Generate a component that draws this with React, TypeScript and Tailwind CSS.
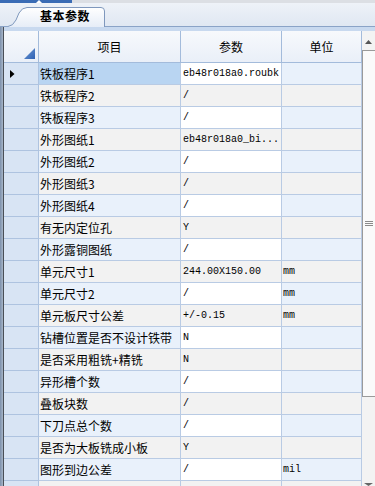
import React from "react";

type Row = { item: string; param: string; unit: string };

const rows: Row[] = [
  { item: "铁板程序1", param: "eb48r018a0.roubk", unit: "" },
  { item: "铁板程序2", param: "/", unit: "" },
  { item: "铁板程序3", param: "/", unit: "" },
  { item: "外形图纸1", param: "eb48r018a0_bi...", unit: "" },
  { item: "外形图纸2", param: "/", unit: "" },
  { item: "外形图纸3", param: "/", unit: "" },
  { item: "外形图纸4", param: "/", unit: "" },
  { item: "有无内定位孔", param: "Y", unit: "" },
  { item: "外形露铜图纸", param: "/", unit: "" },
  { item: "单元尺寸1", param: "244.00X150.00", unit: "mm" },
  { item: "单元尺寸2", param: "/", unit: "mm" },
  { item: "单元板尺寸公差", param: "+/-0.15", unit: "mm" },
  { item: "钻槽位置是否不设计铁带", param: "N", unit: "" },
  { item: "是否采用粗铣+精铣", param: "N", unit: "" },
  { item: "异形槽个数", param: "/", unit: "" },
  { item: "叠板块数", param: "/", unit: "" },
  { item: "下刀点总个数", param: "/", unit: "" },
  { item: "是否为大板铣成小板", param: "Y", unit: "" },
  { item: "图形到边公差", param: "/", unit: "mil" },
  { item: "", param: "", unit: "" },
];

function GridRow({ row, index }: { row: Row; index: number }) {
  const alt = index % 2 === 1;
  const selected = index === 0;
  const itemBg = selected ? "bg-[#b9d5f2]" : alt ? "bg-[#f2f2f2]" : "bg-[#e9f1fb]";
  const paramBg = alt ? "bg-[#f2f2f2]" : "bg-white";
  const unitBg = alt ? "bg-[#f2f2f2]" : "bg-[#e9f1fb]";
  return (
    <div className="flex h-[22px] shrink-0">
      <div className="w-[35px] shrink-0 bg-[#d8e4f4] border-r border-b border-[#aec3e0] flex items-center pl-[6px]">
        {selected && (
          <svg width="5" height="8" viewBox="0 0 5 8">
            <path d="M0 0 L4.5 4 L0 8 Z" fill="#000" />
          </svg>
        )}
      </div>
      <div className={`w-[142px] shrink-0 ${itemBg} border-r border-b border-[#b9cbe4] flex items-center pl-[1px] text-[12px] text-black whitespace-nowrap overflow-hidden`}>
        {row.item}
      </div>
      <div className={`w-[101px] shrink-0 ${paramBg} border-r border-b border-[#b9cbe4] flex items-center pl-[2px] text-[10px] text-black whitespace-nowrap overflow-hidden font-['Liberation_Mono',monospace]`}>
        {row.param}
      </div>
      <div className={`w-[80px] shrink-0 ${unitBg} border-r border-b border-[#b9cbe4] flex items-center pl-[1px] text-[10px] text-black whitespace-nowrap overflow-hidden font-['Liberation_Mono',monospace]`}>
        {row.unit}
      </div>
    </div>
  );
}

export default function App() {
  return (
    <div className="w-[375px] h-[486px] overflow-hidden flex flex-col bg-[#eef2f7] font-['Noto_Sans_CJK_SC','Noto_Sans',sans-serif]">
      {/* top band */}
      <div className="h-[3px] flex shrink-0">
        <div className="w-[35px] bg-[#3a6cb5]" />
        <div className="w-[8px] bg-[#3a6cb5] flex justify-center">
          <svg width="8" height="3" viewBox="0 0 8 3">
            <path d="M1 3 L4 0 L7 3 Z" fill="#ffffff" />
          </svg>
        </div>
        <div className="w-[29px] bg-[#3a6cb5]" />
        <div className="flex-1 bg-[#dcdfe4]" />
      </div>

      {/* tab strip */}
      <div className="h-[24px] shrink-0 flex bg-gradient-to-b from-[#eef2f8] to-[#dfe7f2]">
        <div className="w-[8px] shrink-0 border-b border-[#8aa3c7]" />
        <div className="w-[97px] shrink-0 flex flex-col justify-end">
          <div className="relative h-[20px] flex items-center pl-[32px] pb-[2px]">
            <svg className="absolute inset-0" width="97" height="20" viewBox="0 0 97 20">
              <defs>
                <linearGradient id="tabg" x1="0" y1="0" x2="0" y2="1">
                  <stop offset="0" stopColor="#ffffff" />
                  <stop offset="1" stopColor="#e6edf7" />
                </linearGradient>
              </defs>
              <path
                d="M0 20 L0 19.5 Q5 19 8 13 L11 6 Q14 0.5 19 0.5 L93 0.5 Q96.5 0.5 96.5 4 L96.5 20 Z"
                fill="url(#tabg)"
              />
              <path
                d="M0 19.5 Q5 19 8 13 L11 6 Q14 0.5 19 0.5 L93 0.5 Q96.5 0.5 96.5 4 L96.5 20"
                fill="none"
                stroke="#7f98bd"
                strokeWidth="1"
              />
            </svg>
            <span className="relative text-[12px] font-bold text-black leading-none tracking-[0.5px]">基本参数</span>
          </div>
        </div>
        <div className="flex-1 border-b border-[#8aa3c7]" />
      </div>

      {/* body */}
      <div className="flex-1 flex min-h-0">
        <div className="w-[3px] shrink-0 bg-gradient-to-r from-[#7d90ab] to-[#a7b6c9]" />
        <div className="w-[1px] shrink-0 bg-[#4a4f57]" />
        <div className="flex-1 flex flex-col min-h-0 bg-[#c8d9ef]">
          <div className="h-[4px] shrink-0" />
          <div className="flex flex-1 min-h-0">
            {/* grid */}
            <div className="w-[358px] shrink-0 flex flex-col overflow-hidden bg-[#f2f2f2]">
              {/* header */}
              <div className="flex h-[32px] shrink-0 bg-gradient-to-b from-[#f7f9fc] to-[#e9eff8]">
                <div className="w-[35px] shrink-0 border-r border-b border-[#a3bbdb] flex items-end justify-end pr-[3px] pb-[3px]">
                  <svg width="11" height="11" viewBox="0 0 11 11">
                    <defs>
                      <linearGradient id="cg" x1="0" y1="0" x2="1" y2="1">
                        <stop offset="0" stopColor="#6f9ad6" />
                        <stop offset="1" stopColor="#2f62b3" />
                      </linearGradient>
                    </defs>
                    <path d="M11 0 L11 11 L0 11 Z" fill="url(#cg)" />
                  </svg>
                </div>
                <div className="w-[142px] shrink-0 border-r border-b border-[#a3bbdb] flex items-center justify-center text-[12px] text-black">
                  项目
                </div>
                <div className="w-[101px] shrink-0 border-r border-b border-[#a3bbdb] flex items-center justify-center text-[12px] text-black">
                  参数
                </div>
                <div className="w-[80px] shrink-0 border-r border-b border-[#a3bbdb] flex items-center justify-center text-[12px] text-black">
                  单位
                </div>
              </div>
              {rows.map((r, i) => (
                <GridRow key={i} row={r} index={i} />
              ))}
            </div>

            {/* scrollbar */}
            <div className="w-[13px] shrink-0 flex flex-col bg-[#f3f3f3]">
              <div className="h-[19px] shrink-0 flex items-center justify-center pt-[2px]">
                <svg width="7" height="4" viewBox="0 0 7 4">
                  <path d="M0 4 L3.5 0 L7 4 Z" fill="#555" />
                </svg>
              </div>
              <div className="h-[347px] shrink-0 bg-[#fafafa] border-l border-t border-b border-[#9a9a9a] flex items-center justify-center">
                <svg width="8" height="6" viewBox="0 0 8 6">
                  <path d="M0 0.5 H8 M0 2.5 H8 M0 4.5 H8" stroke="#8a8a8a" strokeWidth="1" />
                </svg>
              </div>
              <div className="flex-1" />
              <div className="h-[4px] shrink-0 flex items-end justify-center">
                <svg width="9" height="3" viewBox="0 0 9 3">
                  <path d="M0 0 H9 L4.5 3 Z" fill="#666" />
                </svg>
              </div>
            </div>
          </div>
        </div>
      </div>
    </div>
  );
}
